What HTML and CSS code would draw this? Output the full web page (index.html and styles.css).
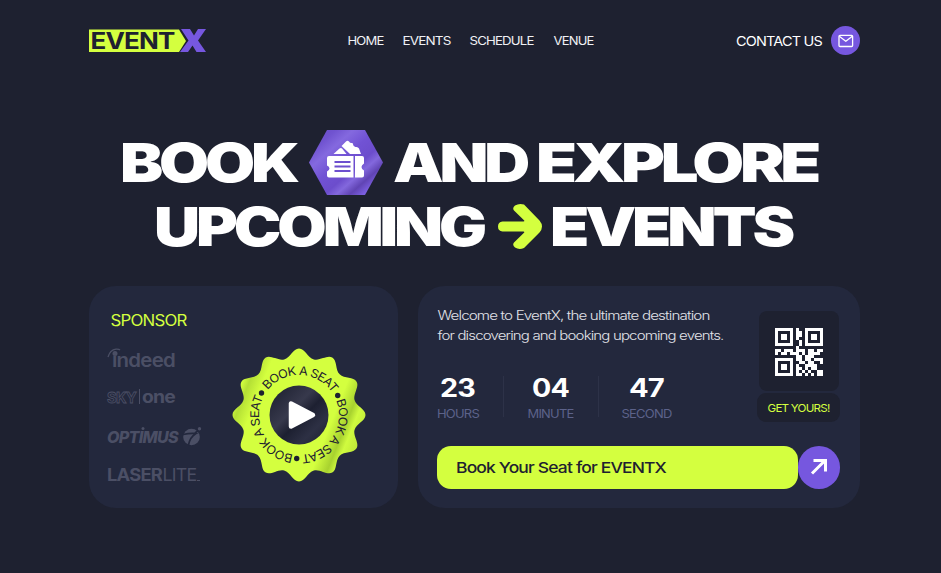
FILE: index.html
```html
<!DOCTYPE html>
<html lang="en">
<head>
<meta charset="utf-8">
<title>EventX</title>
<link rel="stylesheet" href="styles.css">
</head>
<body>
<div class="page">
  <header class="header">
    <svg class="logo" width="117" height="24" viewBox="0 0 117 24">
      <path d="M0 0.5H90L97 12L90 23H0Z" fill="#d4ff3f"/>
      <text class="logo-event" x="1.500" y="20" textLength="84" lengthAdjust="spacingAndGlyphs">EVENT</text>
      <path d="M92 0H101L105 6.500L109 0H117L109 11.500L117 23H107.500L103.500 16.500L99 23H91L99.500 11.500Z" fill="#7657df"/>
    </svg>
    <nav class="nav">
      <a><svg width="36" height="9"><text x="-.5" y="8.500" textLength="36" lengthAdjust="spacingAndGlyphs">HOME</text></svg></a>
      <a><svg width="48" height="9"><text x="-.5" y="8.500" textLength="48" lengthAdjust="spacingAndGlyphs">EVENTS</text></svg></a>
      <a><svg width="64" height="9"><text x="-.5" y="8.500" textLength="64" lengthAdjust="spacingAndGlyphs">SCHEDULE</text></svg></a>
      <a><svg width="41" height="9"><text x="-.5" y="8.500" textLength="40" lengthAdjust="spacingAndGlyphs">VENUE</text></svg></a>
    </nav>
    <a class="contact">
      <svg width="87" height="10"><text y="9.500" textLength="86" lengthAdjust="spacingAndGlyphs">CONTACT US</text></svg>
      <span class="contact-icon">
        <svg width="16" height="14" viewBox="0 0 16 14" fill="none" stroke="#fff" stroke-width="1.300" stroke-linejoin="round"><rect x="1" y="1.300" width="13.600" height="11.200" rx="1"/><path d="M1.300 2.300L7.800 7.300L14.300 2.300"/></svg>
      </span>
    </a>
  </header>

  <h1 class="headline">
    <span class="line line-one">
      <svg class="book" width="175" height="39"><text x="-3" y="39" textLength="176" lengthAdjust="spacingAndGlyphs">BOOK</text></svg>
      <svg class="hex" width="74" height="65" viewBox="0 0 74 65">
        <defs>
          <linearGradient id="violet" x1="0" y1="0" x2="1" y2="1">
            <stop offset="0" stop-color="#6549c4"/><stop offset=".18" stop-color="#7053d0"/><stop offset=".3" stop-color="#8469df"/><stop offset=".45" stop-color="#7152d4"/><stop offset=".6" stop-color="#6c4dcc"/><stop offset=".68" stop-color="#8368dd"/><stop offset=".77" stop-color="#6044b4"/><stop offset=".86" stop-color="#7c5fe0"/><stop offset="1" stop-color="#7759dc"/>
          </linearGradient>
        </defs>
        <path d="M18 0H56L74 32.500L56 65H18L0 32.500Z" fill="url(#violet)"/>
        <g fill="#fff">
          <path d="M24.500 24L30.500 18.500Q32 17.500 33 18.500L37.500 24Z"/>
          <path d="M32.500 16L37 11.500Q38.500 10 40 11.500Q41 13.500 43.500 13Q44 16 46.500 17Q49 16.500 50 18.500L52 24H41Z"/>
          <path d="M20 26H44.500V47.500H20Q18 47.500 18 45.500V41.500Q20.500 40 20.500 38.500Q20.500 36.500 18 35.500V28Q18 26 20 26Z"/>
          <path d="M46 26H53Q55 26 55 28V33.500Q52.500 35 52.500 37Q52.500 39 55 40.500V45.500Q55 47.500 53 47.500H46Z"/>
        </g>
        <path d="M25.500 32H41.500M25.500 36.500H41.500M25.500 41H41.500" stroke="#6d4fce" stroke-width="2"/>
      </svg>
      <svg class="and" width="134" height="39"><text x="-1" y="39" textLength="133" lengthAdjust="spacingAndGlyphs">AND</text></svg>
      <svg width="281" height="39"><text x="-2" y="39" textLength="281" lengthAdjust="spacingAndGlyphs">EXPLORE</text></svg>
    </span>
    <span class="line line-two">
      <svg width="328" height="39"><text x="-3" y="39" textLength="329" lengthAdjust="spacingAndGlyphs">UPCOMING</text></svg>
      <svg class="arrow" width="44" height="45" viewBox="0 0 44 45"><path d="M4.500 17.500H25.500Q27 17.500 26 16.200L16 6.500Q14 4 17 1.500Q21-1 26 .5L41.500 16.500Q46.500 22.500 41.500 28.500L26 44Q21 46 17 43.500Q14 41 16 38.500L26 28.800Q27 27.500 25.500 27.500H4.500Q0 27 0 22.500Q0 18 4.500 17.500Z" fill="#d4ff3f"/></svg>
      <svg width="242" height="39"><text x="-2" y="39" textLength="241" lengthAdjust="spacingAndGlyphs">EVENTS</text></svg>
    </span>
  </h1>

  <main class="cards">
    <section class="card sponsor-card">
      <div class="sponsors">
        <h2 class="sponsor-title"><svg width="76" height="11"><text x="-.5" y="11.500" textLength="76" lengthAdjust="spacingAndGlyphs">SPONSOR</text></svg></h2>
        <svg class="brand indeed" width="70" height="20" viewBox="0 0 70 20">
          <path d="M1 9Q3 2 9 1.200Q12 1 13 2" fill="none" stroke="#4b4f65" stroke-width="1.300"/>
          <circle cx="8" cy="5.500" r="2.500" fill="#4b4f65"/>
          <text x="5" y="19" textLength="63" lengthAdjust="spacingAndGlyphs">&#305;ndeed</text>
        </svg>
        <svg class="brand skyone" width="70" height="16" viewBox="0 0 70 16">
          <text class="outlined" x="0" y="13.500" textLength="29" lengthAdjust="spacingAndGlyphs">SKY</text>
          <path d="M32.500 0V15" stroke="#4b4f65"/>
          <text x="35" y="13.500" textLength="33" lengthAdjust="spacingAndGlyphs">one</text>
        </svg>
        <svg class="brand optimus" width="96" height="20" viewBox="0 0 96 20">
          <text x="0" y="16" textLength="71" lengthAdjust="spacingAndGlyphs">OPTIMUS</text>
          <circle cx="36" cy="1.500" r="1.500" fill="#4b4f65"/>
          <circle cx="84.500" cy="10" r="8.300" fill="#4b4f65"/>
          <path d="M76 7.500Q83 6 89 6.500Q83 10 81.500 18M88 6L94 1.500" fill="none" stroke="#23283d" stroke-width="1.700"/>
          <circle cx="92.500" cy="1.800" r="1.700" fill="#4b4f65"/>
        </svg>
        <svg class="brand laser" width="96" height="14" viewBox="0 0 96 14">
          <text class="heavy" x="0" y="13" textLength="55" lengthAdjust="spacingAndGlyphs">LASER</text>
          <text x="55.500" y="13" textLength="34" lengthAdjust="spacingAndGlyphs">LITE</text>
          <path d="M90 12.500H93" stroke="#4b4f65"/>
        </svg>
      </div>
      <svg class="badge" width="134" height="134" viewBox="-67 -67 134 134">
        <defs>
          <path id="lobe" d="M-14.880 0V-55.540C-8.500-57.300-6-66.500 0-66.500S8.500-57.300 14.880-55.540V0Z"/>
          <clipPath id="seal">
            <use href="#lobe"/><use href="#lobe" transform="rotate(30)"/><use href="#lobe" transform="rotate(60)"/><use href="#lobe" transform="rotate(90)"/><use href="#lobe" transform="rotate(120)"/><use href="#lobe" transform="rotate(150)"/><use href="#lobe" transform="rotate(180)"/><use href="#lobe" transform="rotate(210)"/><use href="#lobe" transform="rotate(240)"/><use href="#lobe" transform="rotate(270)"/><use href="#lobe" transform="rotate(300)"/><use href="#lobe" transform="rotate(330)"/>
          </clipPath>
          <linearGradient id="lime" x1="0" y1=".2" x2="1" y2=".6">
            <stop offset="0" stop-color="#c8f43b"/><stop offset=".08" stop-color="#d4ff3f"/><stop offset=".13" stop-color="#b4df35"/><stop offset=".22" stop-color="#d4ff3f"/><stop offset=".76" stop-color="#d4ff3f"/><stop offset=".86" stop-color="#a8d22f"/><stop offset=".91" stop-color="#d0fb3f"/><stop offset="1" stop-color="#bde837"/>
          </linearGradient>
          <linearGradient id="ink" x1="0" y1="0" x2="1" y2="1">
            <stop offset="0" stop-color="#191c2c"/><stop offset=".4" stop-color="#37394c"/><stop offset=".55" stop-color="#1d2031"/><stop offset=".75" stop-color="#2d3044"/><stop offset="1" stop-color="#1b1e2e"/>
          </linearGradient>
          <path id="ring" d="M0 40A40 40 0 0 1 0-40A40 40 0 0 1 0 40"/>
        </defs>
        <rect x="-67" y="-67" width="134" height="134" fill="url(#lime)" clip-path="url(#seal)"/>
        <g class="ring-text">
          <text transform="rotate(2)"><textPath href="#ring" startOffset="88" textLength="75" lengthAdjust="spacingAndGlyphs">BOOK A SEAT</textPath></text>
          <text transform="rotate(122)"><textPath href="#ring" startOffset="88" textLength="75" lengthAdjust="spacingAndGlyphs">BOOK A SEAT</textPath></text>
          <text transform="rotate(242)"><textPath href="#ring" startOffset="88" textLength="75" lengthAdjust="spacingAndGlyphs">BOOK A SEAT</textPath></text>
          <circle cx="38.700" cy="-19.500" r="2.700"/><circle cx="-2.300" cy="43.500" r="2.700"/><circle cx="-37.500" cy="-22" r="2.700"/>
        </g>
        <circle r="29.500" fill="url(#ink)"/>
        <path d="M-8-11.500V11.500L14 0Z" fill="#fff" stroke="#fff" stroke-width="4.500" stroke-linejoin="round"/>
      </svg>
    </section>

    <section class="card booking-card">
      <div class="booking-top">
        <div class="booking-info">
          <p class="intro">
            <svg width="272" height="20"><text x=".5" y="14.500" textLength="272" lengthAdjust="spacingAndGlyphs">Welcome to EventX, the ultimate destination</text></svg>
            <svg width="286" height="20"><text x=".5" y="14.500" textLength="286" lengthAdjust="spacingAndGlyphs">for discovering and booking upcoming events.</text></svg>
          </p>
          <div class="countdown">
            <div class="unit"><svg class="number" width="36" height="18"><text y="18.500" textLength="35" lengthAdjust="spacingAndGlyphs">23</text></svg><svg class="label" width="42" height="9"><text y="8.500" textLength="42" lengthAdjust="spacingAndGlyphs">HOURS</text></svg></div>
            <i class="divider"></i>
            <div class="unit"><svg class="number" width="38" height="18"><text y="18.500" textLength="37" lengthAdjust="spacingAndGlyphs">04</text></svg><svg class="label" width="46" height="9"><text x="-.5" y="8.500" textLength="46" lengthAdjust="spacingAndGlyphs">MINUTE</text></svg></div>
            <i class="divider"></i>
            <div class="unit"><svg class="number" width="36" height="18"><text x="-1" y="18.500" textLength="35" lengthAdjust="spacingAndGlyphs">47</text></svg><svg class="label" width="50" height="9"><text x="-1.500" y="8.500" textLength="50" lengthAdjust="spacingAndGlyphs">SECOND</text></svg></div>
          </div>
        </div>
        <aside class="pass">
          <div class="qr">
            <svg width="48" height="48" viewBox="0 0 16 16" shape-rendering="crispEdges">
              <path fill="#fff" fill-rule="evenodd" d="M0 0H6V6H0ZM1 1V5H5V1ZM2 2H4V4H2ZM10 0H16V6H10ZM11 1V5H15V1ZM12 2H14V4H12ZM0 10H6V16H0ZM1 11V15H5V11ZM2 12H4V14H2Z"/>
              <path stroke="#fff" d="M7 .5h1M7 1.500h2M7 2.500h2M7 3.500h1M8 4.500h1M8 5.500h1M7 6.500h1M0 7.500h2M3 7.500h3M7 7.500h3M11 7.500h2M14 7.500h2M0 8.500h1M2 8.500h2M5 8.500h3M9 8.500h1M11 8.500h4M7 9.500h2M10 9.500h3M7 10.500h2M10 10.500h2M13 10.500h3M8 11.500h2M11 11.500h2M15 11.500h1M7 12.500h1M10 12.500h4M7 13.500h2M10 13.500h1M12 13.500h2M7 14.500h1M9 14.500h1M11 14.500h1M14 14.500h2M7 15.500h2M10 15.500h1M12 15.500h1M14 15.500h2"/>
            </svg>
          </div>
          <div class="get-yours"><svg width="62" height="8"><text x="-.5" y="8" textLength="62" lengthAdjust="spacingAndGlyphs">GET YOURS!</text></svg></div>
        </aside>
      </div>
      <div class="cta">
        <a class="cta-label"><svg width="211" height="11"><text x="0" y="10.500" textLength="210" lengthAdjust="spacingAndGlyphs">Book Your Seat for EVENTX</text></svg></a>
        <a class="cta-arrow"><svg width="18" height="18" viewBox="0 0 18 18" fill="none" stroke="#fff" stroke-width="3"><path d="M2 15.500L15 2.500M3.500 2.500H15.500V13.500"/></svg></a>
      </div>
    </section>
  </main>
</div>
</body>
</html>
```
FILE: styles.css
```css
* { box-sizing: border-box; }
body {
  margin: 0;
  background: #1e2130;
  font-family: Inter, "Liberation Sans", sans-serif;
  letter-spacing: -.045em;
  color: #fff;
}
svg { display: block; overflow: visible; flex: none; }
text { fill: currentColor; }
.page { width: 771px; height: 573px; margin-left: 89px; }

.header {
  display: grid;
  grid-template-columns: 259px 1fr auto;
  align-items: center;
  height: 81px;
}
.logo-event { font-size: 23px; font-weight: 700; fill: #1e2130; }
.nav { display: flex; gap: 19.200px; font-size: 11.500px; color: #f0f1f5; }
.contact { display: flex; align-items: center; gap: 8px; font-size: 13px; }
.contact-icon {
  display: flex;
  align-items: center;
  justify-content: center;
  width: 29px;
  height: 29px;
  border-radius: 50%;
  background: #7657df;
}

.headline {
  margin: 49px 0 0;
  font-size: 53.600px;
  font-weight: 900;
  letter-spacing: -.065em;
}
.line { display: flex; align-items: center; }
.line-one { height: 65px; padding-left: 34px; }
.hex { margin-left: 11px; }
.and { margin: 0 10px 0 11px; }
.line-two { height: 63px; padding-left: 68px; }
.arrow { margin: 0 10px 0 13px; }

.cards {
  display: grid;
  grid-template-columns: 309px 442px;
  gap: 20px;
  height: 222px;
  margin-top: 28px;
}
.card { border-radius: 27px; background: #23283d; }
.sponsor-card { display: flex; padding: 28px 0 0 18px; }
.sponsors { width: 125px; }
.sponsor-title {
  margin: 0 0 23px 4px;
  font-size: 15.200px;
  font-weight: 400;
  color: #d4ff3f;
}
.brand { color: #4b4f65; font-weight: 700; }
.indeed { font-size: 19px; font-weight: 600; }
.skyone { margin-top: 21px; font-size: 17.500px; }
.outlined { font-size: 15px; fill: none; stroke: #4b4f65; stroke-width: .8; }
.optimus { margin-top: 22px; font-size: 16px; font-style: italic; font-weight: 800; }
.laser { margin-top: 21px; font-size: 17px; font-weight: 400; }
.heavy { font-weight: 700; }
.badge { margin-top: 34px; }
.ring-text { font-size: 12px; fill: #1e2130; color: #1e2130; }

.booking-card { padding: 19px 20px 0 19px; }
.booking-top { display: flex; justify-content: space-between; height: 141px; }
.intro { margin: 0; font-size: 12.800px; font-weight: 300; color: #e2e3e9; }
.countdown { display: flex; margin-top: 31px; }
.unit { display: flex; flex-direction: column; align-items: center; padding-top: 2px; }
.number { font-size: 25px; font-weight: 700; }
.label { margin-top: 13px; font-size: 12px; color: #5c628a; }
.divider { width: 1px; height: 41px; margin: 0 24px; background: #2d3248; }
.pass { display: flex; flex-direction: column; align-items: center; gap: 2px; margin-top: 6px; }
.qr, .get-yours {
  display: flex;
  align-items: center;
  justify-content: center;
  background: #1e2130;
}
.qr { width: 80px; height: 80px; border-radius: 8px; padding-top: 2px; }
.get-yours { width: 83px; height: 29px; border-radius: 9px; font-size: 11px; color: #d4ff3f; }
.cta { display: flex; }
.cta-label {
  display: flex;
  align-items: center;
  width: 360.500px;
  height: 42.500px;
  padding-left: 19px;
  border-radius: 14px;
  background: #d4ff3f;
  color: #1e2130;
  font-size: 15.200px;
  font-weight: 500;
}
.cta-arrow {
  display: flex;
  align-items: center;
  justify-content: center;
  width: 42.500px;
  height: 42.500px;
  border-radius: 50%;
  background: #7657df;
}
```
